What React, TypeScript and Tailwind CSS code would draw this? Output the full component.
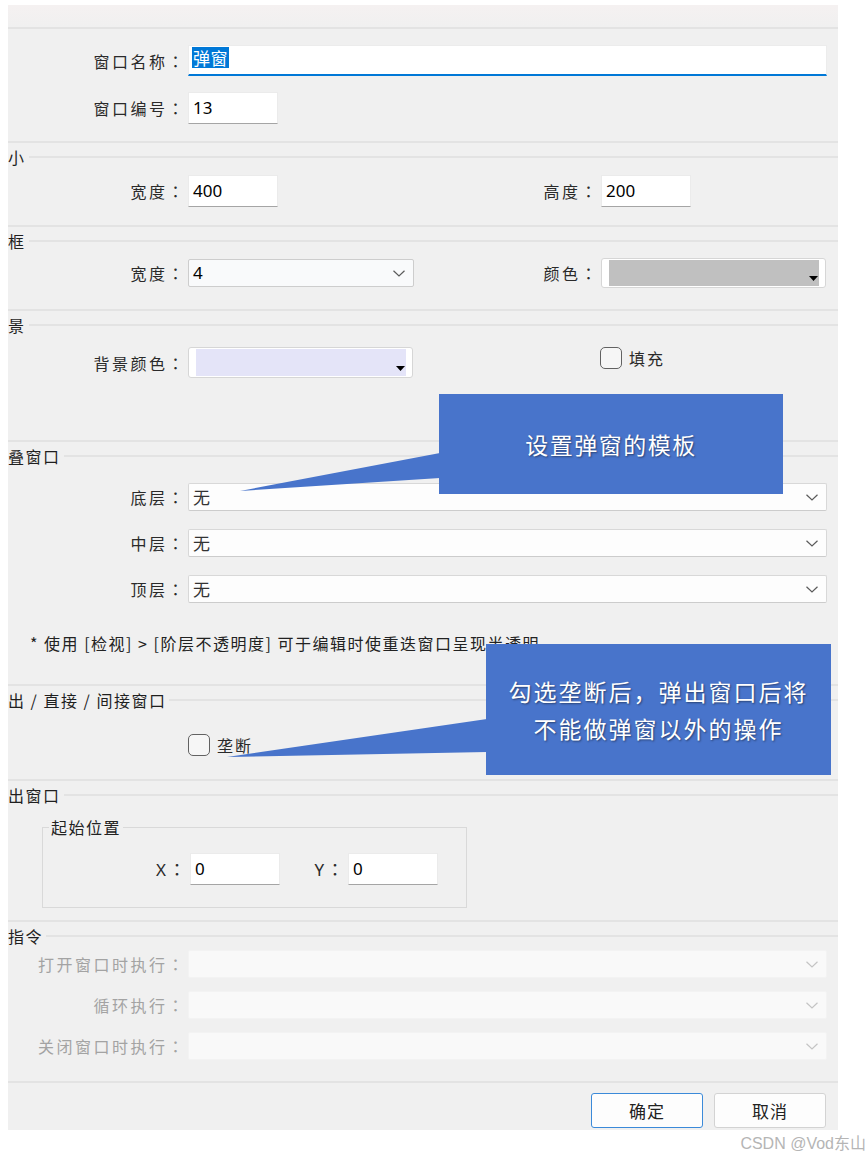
import React from "react";

// small drawings used by the form controls
const Chevron = ({ color = "#5a5a5a" }: { color?: string }) => (
  <svg width="12" height="7" viewBox="0 0 12 7" fill="none">
    <path d="M0.5 0.8 L6 6 L11.5 0.8" stroke={color} strokeWidth="1.2" />
  </svg>
);

const DropTriangle = () => (
  <svg width="9" height="5" viewBox="0 0 9 5" className="absolute bottom-[6px] right-[7px]">
    <path d="M0 0 H9 L4.5 5 Z" fill="#000" />
  </svg>
);

// centred full-width colon, as the dialog draws it
const Colon = () => <span className="font-['Noto_Sans_CJK_TC',sans-serif]">：</span>;

const Sep = () => <div className="h-[2px] bg-[#e3e3e3]" />;

const Header = ({ title }: { title: string }) => (
  <div className="flex h-[28px] items-center">
    <span className="leading-none text-[#1f1f1f]">{title}</span>
    <div className="ml-[3px] h-[2px] flex-1 bg-[#e3e3e3]" />
  </div>
);

const Label = ({ text, muted }: { text: string; muted?: boolean }) => (
  <span
    className={
      muted
        ? "w-[178px] shrink-0 text-right tracking-[2.5px] text-[#a3a3a3]"
        : "w-[178px] shrink-0 text-right tracking-[2.5px]"
    }
  >
    {text}
    <Colon />
  </span>
);

const TextBox = ({ value }: { value: string }) => (
  <div className="ml-[2px] flex h-[32px] w-[90px] items-center border border-[#ebebeb] border-b-[#a5a5a5] bg-white pl-[4px] font-['Noto_Sans',sans-serif] text-[17px] tracking-normal text-black">
    {value}
  </div>
);

const WideSelect = ({ value, disabled }: { value?: string; disabled?: boolean }) => (
  <div
    className={
      disabled
        ? "ml-[2px] flex h-[28px] w-[639px] items-center justify-end rounded-[2px] border border-[#f3f3f3] bg-[#f9f9f9] pr-[8px]"
        : "ml-[2px] flex h-[28px] w-[639px] items-center justify-between rounded-[2px] border border-[#d8d8d8] border-b-[#cccccc] bg-[#fdfdfd] pl-[4px] pr-[8px]"
    }
  >
    {value && <span className="text-[17px] tracking-normal text-[#333]">{value}</span>}
    <Chevron color={disabled ? "#c4c4c4" : "#5a5a5a"} />
  </div>
);

const ColorSelect = ({ swatch, tall }: { swatch: string; tall?: boolean }) => (
  <div
    className={
      tall
        ? "relative ml-[2px] flex h-[31px] w-[225px] rounded-[3px] border border-[#d6d6d6] bg-white py-[1px] pl-[7px] pr-[6px]"
        : "relative ml-[2px] flex h-[30px] w-[225px] rounded-[3px] border border-[#d6d6d6] bg-white py-[1px] pl-[7px] pr-[6px]"
    }
  >
    <div className={`h-full flex-1 ${swatch}`} />
    <DropTriangle />
  </div>
);

const CheckBox = ({ label }: { label: string }) => (
  <div className="flex items-center gap-[7px]">
    <div className="h-[22px] w-[22px] rounded-[5px] border-[1.5px] border-[#626262] bg-[#f6f6f6]" />
    <span className="tracking-[2px]">{label}</span>
  </div>
);

export default function App() {
  return (
    <div className="h-[1157px] w-[866px] bg-white pl-[8px] pt-[5px] font-['Noto_Sans_CJK_SC',sans-serif] text-[16px] leading-[22px] tracking-[1.5px] text-[#2a2a2a]">
      <div className="relative w-[830px] bg-[#f0f0f0]">
        {/* title strip */}
        <div className="h-[22px] bg-linear-to-b from-[#f5f1f1] to-[#f0f0f0]" />
        <Sep />

        {/* name / number */}
        <div className="flex flex-col gap-[16px] pb-[17px] pt-[16px]">
          <div className="flex items-center">
            <Label text="窗口名称" />
            <div className="ml-[2px] flex h-[31px] w-[639px] items-start border border-[#ececec] border-b-2 border-b-[#0078d7] bg-white pl-[3px] pt-[1px]">
              <span className="bg-[#0078d7] px-[1px] text-[17px] leading-[21px] tracking-[0.5px] text-white">弹窗</span>
            </div>
          </div>
          <div className="flex items-center">
            <Label text="窗口编号" />
            <TextBox value="13" />
          </div>
        </div>

        {/* 大小 */}
        <Sep />
        <Header title="小" />
        <div className="flex items-center pb-[18px] pt-[4px]">
          <div className="flex w-[413px] items-center">
            <Label text="宽度" />
            <TextBox value="400" />
          </div>
          <Label text="高度" />
          <TextBox value="200" />
        </div>

        {/* 边框 */}
        <Sep />
        <Header title="框" />
        <div className="flex items-center pb-[21px] pt-[3px]">
          <div className="flex w-[413px] items-center">
            <Label text="宽度" />
            <div className="ml-[2px] flex h-[28px] w-[226px] items-center justify-between rounded-[2px] border border-[#cdcdcd] bg-[#f9fafb] pl-[4px] pr-[8px] font-['Noto_Sans',sans-serif] text-[17px] tracking-normal text-black">
              <span>4</span>
              <Chevron />
            </div>
          </div>
          <Label text="颜色" />
          <ColorSelect swatch="bg-[#c0c0c0]" />
        </div>

        {/* 背景 */}
        <Sep />
        <Header title="景" />
        <div className="flex items-start pb-[62px] pt-[8px]">
          <div className="flex w-[413px] items-center">
            <Label text="背景颜色" />
            <ColorSelect swatch="bg-[#e4e4f8]" tall />
          </div>
          <div className="ml-[179px]">
            <CheckBox label="填充" />
          </div>
        </div>

        {/* 重叠窗口 */}
        <Sep />
        <Header title="叠窗口" />
        <div className="flex flex-col gap-[18px] pt-[13px]">
          {["底层", "中层", "顶层"].map((l) => (
            <div key={l} className="flex items-center">
              <Label text={l} />
              <WideSelect value="无" />
            </div>
          ))}
        </div>
        <p className="mt-[28px] pb-[29px] pl-[22px] leading-[24px] text-[#222]">
          * 使用 [检视] &gt; [阶层不透明度] 可于编辑时使重迭窗口呈现半透明
        </p>

        {/* 弹出 / 直接 / 间接窗口 */}
        <Sep />
        <Header title="出 / 直接 / 间接窗口" />
        <div className="pb-[23px] pl-[180px] pt-[20px]">
          <CheckBox label="垄断" />
        </div>

        {/* 弹出窗口 */}
        <Sep />
        <Header title="出窗口" />
        <div className="pb-[12px] pl-[34px] pt-[8px]">
          <fieldset className="w-[425px] border border-[#d9d9d9] pb-[22px]">
            <legend className="ml-[6px] px-[2px] leading-[20px] text-[#222]">起始位置</legend>
            <div className="mt-[16px] flex items-center font-['Noto_Sans','Noto_Sans_CJK_SC',sans-serif] text-[17px] tracking-[2.5px]">
              <span className="w-[145px] text-right">
                X<Colon />
              </span>
              <TextBox value="0" />
              <span className="w-[66px] text-right">
                Y<Colon />
              </span>
              <TextBox value="0" />
            </div>
          </fieldset>
        </div>

        {/* 执行指令 */}
        <Sep />
        <Header title="指令" />
        <div className="flex flex-col gap-[13px] pb-[21px]">
          {["打开窗口时执行", "循环执行", "关闭窗口时执行"].map((l) => (
            <div key={l} className="flex items-center">
              <Label text={l} muted />
              <WideSelect disabled />
            </div>
          ))}
        </div>

        {/* buttons */}
        <Sep />
        <div className="flex justify-end gap-[11px] pb-[2px] pr-[12px] pt-[10px]">
          <button className="h-[35px] w-[112px] rounded-[3px] border border-[#3b8ad9] bg-[#fdfdfd] text-[17px] tracking-[1px] text-[#222]">确定</button>
          <button className="h-[35px] w-[112px] rounded-[3px] border border-[#d3d3d3] bg-[#fdfdfd] text-[17px] tracking-[1px] text-[#222]">取消</button>
        </div>

        {/* annotation callouts */}
        <svg className="pointer-events-none absolute left-0 top-0" width="830" height="1125">
          <polygon points="432,448 432,473 232,486" fill="#4874cb" />
          <polygon points="479,714 479,747 219,752" fill="#4874cb" />
        </svg>
        <div className="absolute left-[431px] top-[389px] flex h-[100px] w-[344px] items-center justify-center bg-[#4874cb] text-[23px] tracking-[1.5px] text-white [text-shadow:1px_1px_2px_rgba(0,0,0,0.45)]">
          设置弹窗的模板
        </div>
        <div className="absolute left-[478px] top-[639px] flex h-[131px] w-[345px] flex-col items-center justify-center bg-[#4874cb] text-[23px] leading-[37px] tracking-[2px] text-white [text-shadow:1px_1px_2px_rgba(0,0,0,0.45)]">
          <span>勾选垄断后，弹出窗口后将</span>
          <span>不能做弹窗以外的操作</span>
        </div>
      </div>

      <div className="flex h-[27px] items-center justify-end font-['Liberation_Sans','Noto_Sans_CJK_SC',sans-serif] text-[16px] tracking-normal text-[#b5b5b5]">
        CSDN @Vod东山
      </div>
    </div>
  );
}
